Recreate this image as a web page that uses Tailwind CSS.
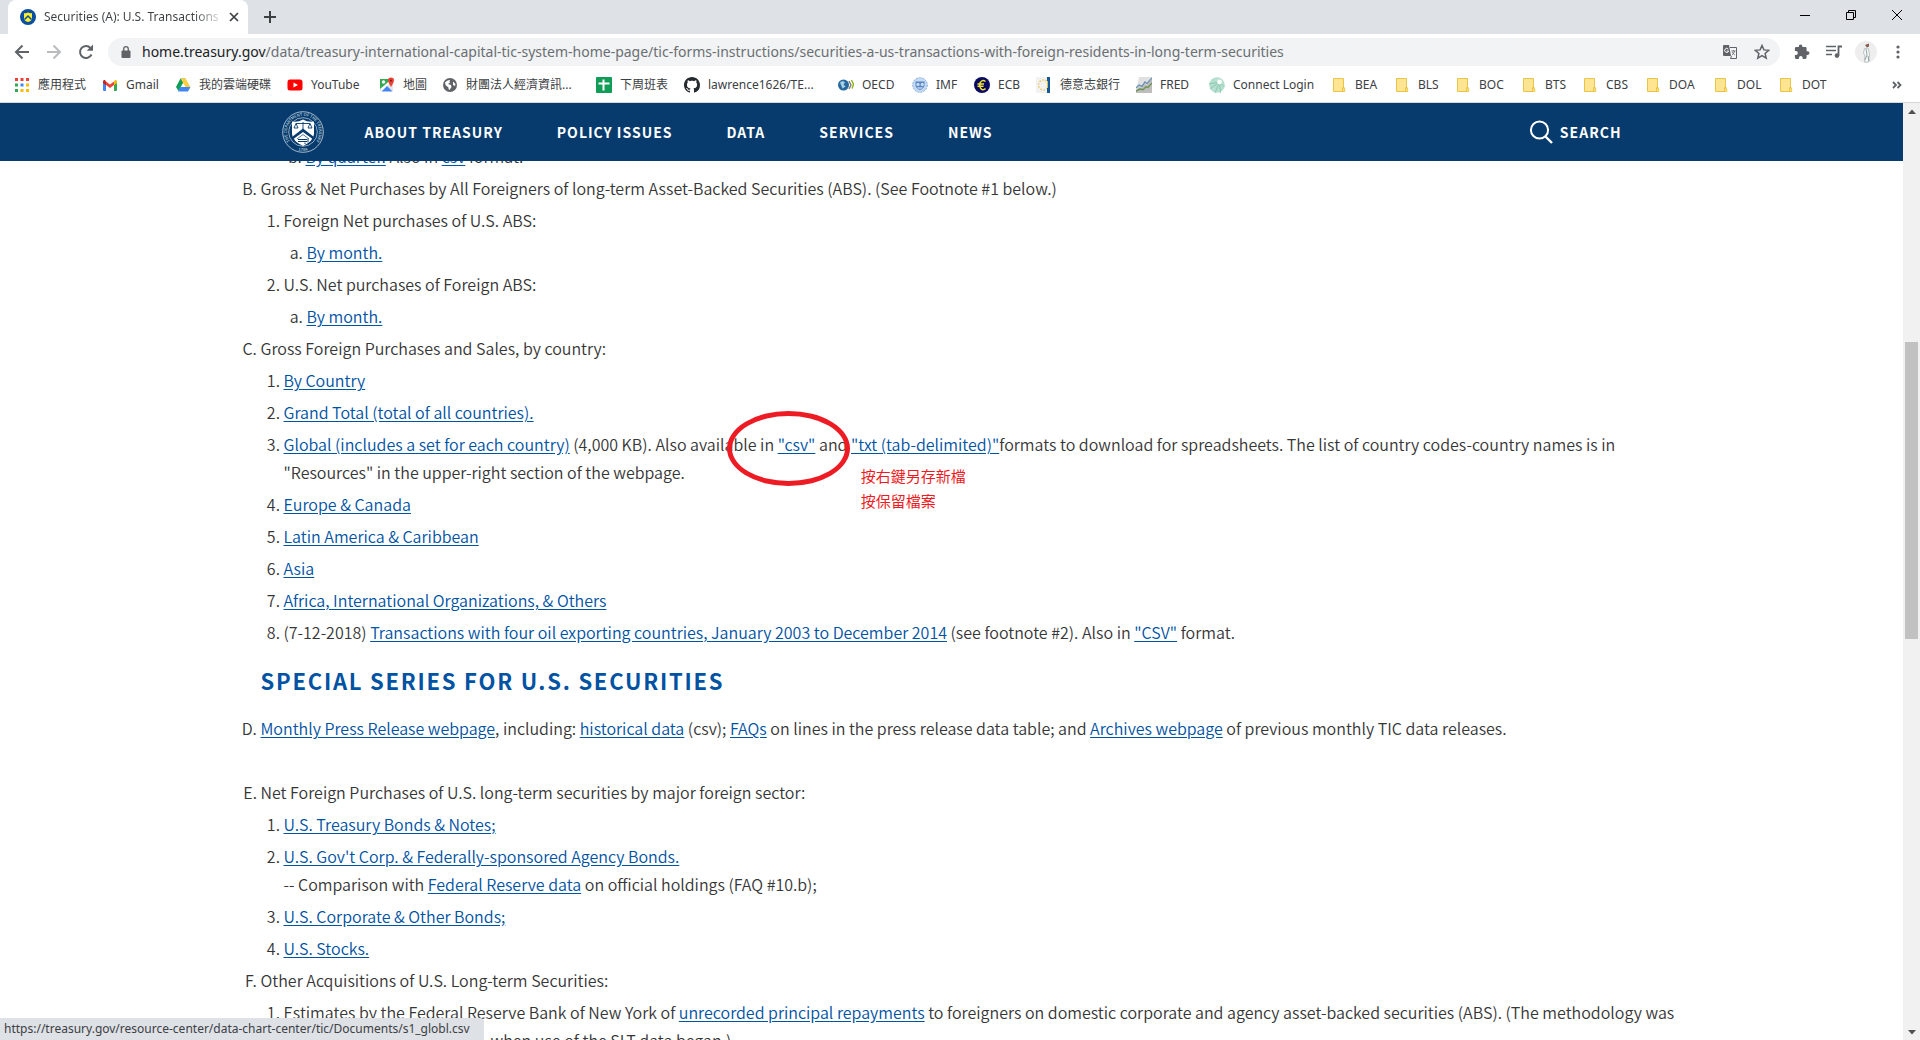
<!DOCTYPE html>
<html lang="en">
<head>
<meta charset="utf-8">
<title>Securities (A): U.S. Transactions</title>
<script src="https://cdn.jsdelivr.net/npm/@tailwindcss/browser@4"></script>
</head>
<body class="flex h-screen flex-col overflow-hidden bg-white font-['Noto_Sans','Noto_Sans_CJK_TC',sans-serif] text-xs text-[#3c4043]">

<svg class="hidden">
  <symbol id="folder" viewBox="0 0 16 16"><path d="M2.500 1.500h10v10h1.200v3H2.500z" fill="#ffe591" stroke="#e8c548"/><path d="M11.500 14.500v-4h2" fill="none" stroke="#e8c548"/></symbol>
</svg>

<!-- Tab strip -->
<div class="flex h-[34px] shrink-0 items-stretch bg-[#dee1e6] pl-2">
  <div class="flex w-[240px] items-center rounded-t-lg bg-white pr-2 pl-3">
    <svg class="size-4 shrink-0" viewBox="0 0 16 16"><circle cx="8" cy="8" r="8" fill="#0a4fa0"/><path d="M4 4q2 .6 4-.6Q10 4.600 12 4v5.500Q11.500 12 8 13 4.500 12 4 9.500z" fill="#ffee2e"/><path d="M4.500 10.500 8 7l3.500 3.500" fill="none" stroke="#0a4fa0" stroke-width="1.500"/></svg>
    <span class="ml-2 w-[176px] bg-linear-to-r from-[#3c4043] from-85% to-[#3c4043]/20 bg-clip-text whitespace-nowrap text-transparent">Securities (A): U.S. Transactions</span>
    <button aria-label="Close tab" class="ml-[7px] flex size-4 items-center justify-center"><svg class="size-4" viewBox="0 0 16 16"><path d="m4 4 8 8m0-8-8 8" stroke="#3c4043" stroke-width="1.700"/></svg></button>
  </div>
  <button aria-label="New tab" class="ml-3.5 flex items-center"><svg class="size-4" viewBox="0 0 16 16"><path d="M8 2v12M2 8h12" stroke="#3c4043" stroke-width="2"/></svg></button>
  <div class="ml-auto flex h-[29px]">
    <button aria-label="Minimize" class="flex w-[46px] items-center justify-center"><svg class="size-2.5" viewBox="0 0 10 10"><path d="M0 5.500h10" stroke="#000"/></svg></button>
    <button aria-label="Restore" class="flex w-[46px] items-center justify-center"><svg class="size-2.5" viewBox="0 0 10 10"><path d="M.5 2.500h7v7h-7zM2.500 2.500v-2h7v7h-2" fill="none" stroke="#000"/></svg></button>
    <button aria-label="Close" class="flex w-[46px] items-center justify-center"><svg class="size-2.5" viewBox="0 0 10 10"><path d="m0 0 10 10m0-10L0 10" stroke="#000"/></svg></button>
  </div>
</div>

<!-- Toolbar -->
<div class="flex h-9 shrink-0 items-center pr-3.5 pl-3">
  <button aria-label="Back" class="flex size-5 items-center justify-center"><svg class="size-5" viewBox="0 0 20 20"><path d="M17 10H4m6.500-6.500L4 10l6.500 6.500" fill="none" stroke="#5f6368" stroke-width="2"/></svg></button>
  <button aria-label="Forward" class="ml-3 flex size-5 items-center justify-center"><svg class="size-5" viewBox="0 0 20 20"><path d="M3 10h13M9.500 3.500 16 10l-6.500 6.500" fill="none" stroke="#babcbe" stroke-width="2"/></svg></button>
  <button aria-label="Reload" class="ml-3 flex size-5 items-center justify-center"><svg class="size-5" viewBox="0 0 20 20"><path d="M15.500 12.500A6 6 0 1 1 14.500 6" fill="none" stroke="#5f6368" stroke-width="2"/><path d="M17 2.500v6.300h-6.300z" fill="#5f6368"/></svg></button>
  <div class="ml-3 flex h-7 min-w-0 flex-1 items-center rounded-full bg-[#f1f3f4] pr-2.5 pl-[13px]">
    <svg class="h-3 w-2.5 shrink-0" viewBox="0 0 10 12"><rect x=".5" y="4.500" width="9" height="7.500" rx="1" fill="#5f6368"/><path d="M2.700 5V3a2.300 2.300 0 0 1 4.600 0v2" fill="none" stroke="#5f6368" stroke-width="1.300"/></svg>
    <span class="ml-[11px] truncate text-sm text-[#6b6f73]"><span class="text-[#202124]">home.treasury.gov</span>/data/treasury-international-capital-tic-system-home-page/tic-forms-instructions/securities-a-us-transactions-with-foreign-residents-in-long-term-securities</span>
    <button aria-label="Translate" class="ml-auto shrink-0"><svg class="size-4" viewBox="0 0 16 16"><path d="M2 1h5l2 11H2a1 1 0 0 1-1-1V2a1 1 0 0 1 1-1z" fill="#5f6368"/><path d="M8 3.500h6.500v11H8.500l1-2.500" fill="none" stroke="#5f6368"/><path d="M6.300 5.200A2 2 0 1 0 6.600 7H4.800" fill="none" stroke="#fff"/><path d="M9.300 7h4.200M11.400 6v1m1.200 0q-.6 2.600-2.800 4m.6-3q.8 2 2.500 3" fill="none" stroke="#5f6368" stroke-width=".8"/></svg></button>
    <button aria-label="Bookmark this page" class="ml-4 shrink-0"><svg class="size-4" viewBox="0 0 16 16"><path d="m8 1.500 1.900 4.400 4.800.4-3.600 3.200 1.100 4.700L8 11.700l-4.200 2.500 1.100-4.700L1.300 6.300l4.800-.4z" fill="none" stroke="#5f6368" stroke-width="1.500"/></svg></button>
  </div>
  <button aria-label="Extensions" class="ml-3.5"><svg class="size-4" viewBox="0 0 16 16"><path d="M13.700 7.300h-1.100V4.500c0-.8-.6-1.400-1.400-1.400H8.400V2.400a1.800 1.800 0 0 0-3.600 0v.7H2.200C1.400 3.100.9 3.700.9 4.500v2.600h1a1.900 1.900 0 0 1 0 3.900h-1v2.600c0 .8.600 1.400 1.300 1.400h2.700v-1.100a1.900 1.900 0 0 1 3.800 0V15h2.500c.8 0 1.400-.6 1.400-1.400v-2.700h1.100a1.800 1.800 0 0 0 0-3.600z" fill="#5f6368"/></svg></button>
  <button aria-label="Media controls" class="ml-4"><svg class="size-4" viewBox="0 0 16 16"><path d="M0 2.500h10M0 6.500h10M0 10.500h6" stroke="#5f6368" stroke-width="1.700"/><path d="M16 2.500h-3.500v9" fill="none" stroke="#5f6368" stroke-width="1.800"/><circle cx="11" cy="11.600" r="2.300" fill="#5f6368"/></svg></button>
  <button aria-label="Profile" class="ml-[13px]"><svg class="size-[22px]" viewBox="0 0 22 22"><circle cx="11" cy="11" r="11" fill="#eee"/><path d="m10 4 4-1.500v3l-2 1z" fill="#8a5a4e"/><path d="M9.500 7.500 13 7l1.500 6-1 8h-4l.5-6-1.500-3z" fill="#fafafa" stroke="#a9b8b8" stroke-width=".8"/><path d="m11 8 1 6-2 5m3-4 1 5" fill="none" stroke="#758c8c" stroke-width=".8"/></svg></button>
  <button aria-label="Menu" class="ml-[13px]"><svg class="size-4" viewBox="0 0 16 16" fill="#5f6368"><circle cx="8" cy="3" r="1.600"/><circle cx="8" cy="8" r="1.600"/><circle cx="8" cy="13" r="1.600"/></svg></button>
</div>

<!-- Bookmarks bar -->
<nav aria-label="Bookmarks" class="flex h-[33px] shrink-0 items-center border-b border-[#d5d7da] pb-0.5 pl-3.5 whitespace-nowrap *:shrink-0 [&_svg]:size-4 [&_svg]:shrink-0">
  <a href="#" class="flex w-[88px] items-center gap-2"><svg viewBox="0 0 16 16"><path d="M1 1h3v3H1zM6.500 1h3v3h-3zM12 1h3v3h-3z" fill="#ea4335"/><path d="M1 6.500h3v3H1z" fill="#34a853"/><path d="M6.500 6.500h3v3h-3z" fill="#4285f4"/><path d="M12 6.500h3v3h-3zM6.500 12h3v3h-3zM12 12h3v3h-3z" fill="#fbbc05"/><path d="M1 12h3v3H1z" fill="#34a853"/></svg>應用程式</a>
  <a href="#" class="flex w-[73px] items-center gap-2"><svg viewBox="0 0 16 16"><path d="M1 4v9a1 1 0 0 0 1 1h2V6z" fill="#4285f4"/><path d="M15 4v9a1 1 0 0 1-1 1h-2V6z" fill="#34a853"/><path d="M4 4.500 8 7.500l4-3v3.500l-4 3-4-3z" fill="#ea4335"/><path d="M12 4.500 13 3q2-.5 2 1.500V6l-3 2.200z" fill="#fbbc05"/><path d="M4 4.500 3 3Q1 2.500 1 4.500V6l3 2.200z" fill="#c5221f"/></svg>Gmail</a>
  <a href="#" class="flex w-[112px] items-center gap-2"><svg viewBox="0 0 16 16"><path d="M5.500 1.500h5L8 6 3.500 14 1 10z" fill="#0f9d58"/><path d="M5.500 1.500h5L15.500 10h-5z" fill="#ffcd40"/><path d="M5.500 10h10L13 14.500H3z" fill="#4285f4"/></svg>我的雲端硬碟</a>
  <a href="#" class="flex w-[92px] items-center gap-2"><svg viewBox="0 0 16 16"><rect x=".5" y="2.500" width="15" height="11" rx="2.500" fill="#f00"/><path d="M6.500 5.500v5L11 8z" fill="#fff"/></svg>YouTube</a>
  <a href="#" class="flex w-[63px] items-center gap-2"><svg viewBox="0 0 16 16"><path d="M2 2h12v12H2z" fill="#e4e4e4"/><path d="M1 2h11L1 14z" fill="#34a853"/><path d="M2.500 14.500 8 9l5.500 5.500z" fill="#4285f4"/><path d="m1 12 12-10v2L2 14.500z" fill="#fff"/><circle cx="4.500" cy="5" r="1.700" fill="#fff"/><path d="M12 .5a3 3 0 0 1 3 3.200Q14.800 6 12 10 9.200 6 9 3.700A3 3 0 0 1 12 .5z" fill="#ea4335"/><circle cx="12" cy="3.600" r="1.100" fill="#8c1d18"/></svg>地圖</a>
  <a href="#" class="flex w-[154px] items-center gap-2"><svg viewBox="0 0 16 16"><circle cx="8" cy="8" r="7" fill="#5f6368"/><path d="M3 5.500q2.500-3 5-2.500-1 1.500 0 2.500l-2 1.500 3 1 .5 2-2 3Q6 12 6.500 10.500L3.500 8zM11 4.500l2.500 2.500-.5 2-2-1z" fill="#fff"/></svg>財團法人經濟資訊...</a>
  <a href="#" class="flex w-[88px] items-center gap-2"><svg viewBox="0 0 16 16"><rect width="16" height="16" rx="1" fill="#0f9d58"/><path d="M2.500 6.500h11M7.500 2.500v11" stroke="#fff" stroke-width="2"/></svg>下周班表</a>
  <a href="#" class="flex w-[154px] items-center gap-2"><svg viewBox="0 0 16 16"><path fill="#24292e" d="M8 0C3.580 0 0 3.580 0 8c0 3.540 2.290 6.530 5.470 7.590.4.070.55-.17.55-.38 0-.19-.01-.82-.01-1.490-2.010.37-2.530-.49-2.690-.94-.09-.23-.48-.94-.82-1.130-.28-.15-.68-.52-.01-.53.63-.01 1.080.58 1.230.82.72 1.210 1.870.87 2.330.66.07-.52.28-.87.51-1.070-1.780-.2-3.640-.89-3.640-3.950 0-.87.31-1.590.82-2.150-.08-.2-.36-1.020.08-2.120 0 0 .67-.21 2.200.82.64-.18 1.320-.27 2-.27s1.360.09 2 .27c1.530-1.040 2.200-.82 2.200-.82.44 1.100.16 1.920.08 2.120.51.56.82 1.270.82 2.150 0 3.070-1.870 3.750-3.650 3.950.29.25.54.73.54 1.480 0 1.070-.01 1.930-.01 2.200 0 .21.15.46.55.38A8.010 8.010 0 0 0 16 8c0-4.420-3.580-8-8-8z"/></svg>lawrence1626/TE...</a>
  <a href="#" class="flex w-[74px] items-center gap-2"><svg viewBox="0 0 16 16"><circle cx="5.500" cy="8" r="5.500" fill="#28689e"/><path d="M2 5.500q3-2.500 5 0l-1.500 2 2 2-3 2z" fill="#a9d2e6"/><path d="m11 4 2 4-2 4" fill="none" stroke="#777" stroke-width="1.300"/><path d="m13.500 3 2 4.500-1.500 4" fill="none" stroke="#93b81e" stroke-width="1.500"/></svg>OECD</a>
  <a href="#" class="flex w-[62px] items-center gap-2"><svg viewBox="0 0 16 16"><circle cx="8" cy="8" r="7.300" fill="#c5daf3" stroke="#82abdc" stroke-dasharray="2 1"/><path d="M3.500 4.500h9V9q-1 3-4.500 4-3.500-1-4.500-4z" fill="#5685c4"/><circle cx="6" cy="7.500" r="1.700" fill="#c5daf3"/><circle cx="10.300" cy="7.500" r="1.700" fill="#c5daf3"/><path d="M5.500 11h5" stroke="#fff"/></svg>IMF</a>
  <a href="#" class="flex w-[62px] items-center gap-2"><svg viewBox="0 0 16 16"><circle cx="8" cy="8" r="8" fill="#0a0a62"/><path d="M11.500 4.500Q8 2 6 6q-1 5 2 6.500 2 .6 3.500-1M3.500 7h6.500M3.500 9.300h6" fill="none" stroke="#f4e62e" stroke-width="1.500"/></svg>ECB</a>
  <a href="#" class="flex w-[100px] items-center gap-2"><svg viewBox="0 0 16 16"><path d="M0 0h14v16H0z" fill="#f2f2f2"/><circle cx="7.500" cy="8" r="5" fill="none" stroke="#f0cf6b" stroke-width="1.600" stroke-dasharray="1.600 1.500"/><path d="M11 0h3v16h-3z" fill="#13589a"/><path d="M11 4h1v7h-1z" fill="#d9c34a"/></svg>德意志銀行</a>
  <a href="#" class="flex w-[73px] items-center gap-2"><svg viewBox="0 0 16 16"><path d="M3 0h13v16H0z" fill="#e0e0e0"/><path d="m0 13 3-3 3 1 3-4 2 1 5-6v14H0z" fill="#bdbdbd"/><path d="m0 11 3-3 3 1.500L9 5l2 1.500L16 1" fill="none" stroke="#6f93b5" stroke-width="1.400"/><path d="m0 14 4-2 3 .8 3-3 2 .7 4-4.500" fill="none" stroke="#6f9450" stroke-width="1.400"/></svg>FRED</a>
  <a href="#" class="flex w-[122px] items-center gap-2"><svg viewBox="0 0 16 16"><circle cx="8" cy="8" r="7.800" fill="#b5dfcf"/><path d="M10.500 5 0 7m10.500-2L1 12m9.500-7L6 16m4.500-11 1 11m-1-11 5 5" stroke="#80c2aa" stroke-width=".8"/><circle cx="10.500" cy="5" r="2.400" fill="#fff"/></svg>Connect Login</a>
  <a href="#" class="flex w-[63px] items-center gap-2"><svg><use href="#folder"/></svg>BEA</a>
  <a href="#" class="flex w-[61px] items-center gap-2"><svg><use href="#folder"/></svg>BLS</a>
  <a href="#" class="flex w-[66px] items-center gap-2"><svg><use href="#folder"/></svg>BOC</a>
  <a href="#" class="flex w-[61px] items-center gap-2"><svg><use href="#folder"/></svg>BTS</a>
  <a href="#" class="flex w-[63px] items-center gap-2"><svg><use href="#folder"/></svg>CBS</a>
  <a href="#" class="flex w-[68px] items-center gap-2"><svg><use href="#folder"/></svg>DOA</a>
  <a href="#" class="flex w-[65px] items-center gap-2"><svg><use href="#folder"/></svg>DOL</a>
  <a href="#" class="flex items-center gap-2"><svg><use href="#folder"/></svg>DOT</a>
  <button aria-label="More bookmarks" class="mr-[15px] ml-auto"><svg viewBox="0 0 16 16"><path d="m4 5 3 3-3 3m4.500-6 3 3-3 3" fill="none" stroke="#5f6368" stroke-width="1.800"/></svg></button>
</nav>

<div class="flex min-h-0 flex-1">
  <div class="flex min-w-0 flex-1 flex-col overflow-hidden font-['Noto_Sans_CJK_TC',sans-serif]">

    <!-- Site header -->
    <header class="relative z-10 shrink-0 bg-[#083b6d] text-white">
      <div class="mx-auto flex h-[58px] max-w-[1340px] items-center">
        <a href="#" aria-label="U.S. Department of the Treasury">
          <svg class="size-[42px]" viewBox="0 0 42 42">
            <circle cx="21" cy="21" r="20.300" fill="none" stroke="#c9d6e3" stroke-width=".8"/>
            <circle cx="21" cy="21" r="14.300" fill="none" stroke="#c9d6e3" stroke-width=".7"/>
            <path id="ring" d="M10.800 33.200A16 16 0 1 1 31.200 33.200" fill="none"/>
            <text fill="#dfe8f0" font-size="4"><textPath href="#ring" startOffset="50%" text-anchor="middle">THE DEPARTMENT OF THE TREASURY</textPath></text>
            <text x="21" y="39.500" text-anchor="middle" fill="#dfe8f0" font-size="4">1789</text>
            <path d="M10 10.500q6 1 11-2 5 3 11 2V23q-.5 7-11 12Q10.500 30 10 23z" fill="#fff"/>
            <path d="M21 11v7M14 12.500h14M14 12.500 12 17h4zM28 12.500 26 17h4z" fill="none" stroke="#083b6d" stroke-width=".9"/>
            <path d="m10 26 11-8.500L32 26v3l-11-8-11 8z" fill="#083b6d"/>
            <path d="m15 28 6-4.500 6 4.500" fill="none" stroke="#083b6d" stroke-width=".7"/>
            <path d="M16 28.500h9m-9 2h9m1-3v4m-3 0v1.500" stroke="#083b6d"/>
          </svg>
        </a>
        <nav aria-label="Main" class="ml-[41px] flex gap-[54px] text-sm font-bold tracking-[1px]">
          <a href="#">ABOUT TREASURY</a><a href="#">POLICY ISSUES</a><a href="#">DATA</a><a href="#">SERVICES</a><a href="#">NEWS</a>
        </nav>
        <button class="ml-auto flex items-center gap-[7px] text-sm font-bold tracking-[1px]">
          <svg class="size-6" viewBox="0 0 24 24"><circle cx="10.500" cy="10" r="8.600" fill="none" stroke="#fff" stroke-width="2"/><path d="m16.500 16.500 6.500 6.500" stroke="#fff" stroke-width="2.400"/></svg>SEARCH
        </button>
      </div>
    </header>

    <!-- Scrolled page content -->
    <main class="-mt-[19px] w-full max-w-[1446px] self-center pl-8 text-base/7 font-[350] text-[#363636] [&_a]:text-[#0052a3] [&_a]:underline [&_a]:underline-offset-2 [&_li]:mb-1 [&_ol_ol]:mt-1 [&_ol_ol]:pl-[23px]">
      <div class="pl-[45px]">
        <ol start="2" class="list-[lower-alpha]"><li><a href="#">By quarter.</a> Also in <a href="#">csv</a> format.</li></ol>
      </div>
      <ol start="2" class="list-[upper-alpha]">
        <li>Gross &amp; Net Purchases by All Foreigners of long-term Asset-Backed Securities (ABS). (See Footnote #1 below.)
          <ol class="list-decimal">
            <li>Foreign Net purchases of U.S. ABS:<ol class="list-[lower-alpha]"><li><a href="#">By month.</a></li></ol></li>
            <li>U.S. Net purchases of Foreign ABS:<ol class="list-[lower-alpha]"><li><a href="#">By month.</a></li></ol></li>
          </ol>
        </li>
        <li>Gross Foreign Purchases and Sales, by country:
          <ol class="list-decimal">
            <li><a href="#">By Country</a></li>
            <li><a href="#">Grand Total (total of all countries).</a></li>
            <li><a href="#">Global (includes a set for each country)</a> (4,000 KB). Also available in <span class="relative"><a href="#">"csv"</a><span class="absolute -top-[21px] -left-[51px] h-[75px] w-[123px] rounded-[50%] border-5 border-[#ed1c24]"></span><span class="absolute top-[31px] left-[83px] text-[15px]/[25px] font-normal whitespace-nowrap text-[#ed1c24]">按右鍵另存新檔<br>按保留檔案</span></span> and <a href="#">"txt (tab-delimited)"</a>formats to download for spreadsheets. The list of country codes-country names is in "Resources" in the upper-right section of the webpage.</li>
            <li><a href="#">Europe &amp; Canada</a></li>
            <li><a href="#">Latin America &amp; Caribbean</a></li>
            <li><a href="#">Asia</a></li>
            <li><a href="#">Africa, International Organizations, &amp; Others</a></li>
            <li>(7-12-2018) <a href="#">Transactions with four oil exporting countries, January 2003 to December 2014</a> (see footnote #2). Also in <a href="#">"CSV"</a> format.</li>
          </ol>
        </li>
      </ol>
      <h2 class="my-5 text-[22px]/7 font-bold tracking-[0.08em] text-[#0052a3]">SPECIAL SERIES FOR U.S. SECURITIES</h2>
      <ol start="4" class="list-[upper-alpha]">
        <li><p class="mb-9"><a href="#">Monthly Press Release webpage</a>, including: <a href="#">historical data</a> (csv); <a href="#">FAQs</a> on lines in the press release data table; and <a href="#">Archives webpage</a> of previous monthly TIC data releases.</p></li>
        <li>Net Foreign Purchases of U.S. long-term securities by major foreign sector:
          <ol class="list-decimal">
            <li><a href="#">U.S. Treasury Bonds &amp; Notes;</a></li>
            <li><a href="#">U.S. Gov't Corp. &amp; Federally-sponsored Agency Bonds.</a><br>-- Comparison with <a href="#">Federal Reserve data</a> on official holdings (FAQ #10.b);</li>
            <li><a href="#">U.S. Corporate &amp; Other Bonds;</a></li>
            <li><a href="#">U.S. Stocks.</a></li>
          </ol>
        </li>
        <li>Other Acquisitions of U.S. Long-term Securities:
          <ol class="list-decimal">
            <li>Estimates by the Federal Reserve Bank of New York of <a href="#">unrecorded principal repayments</a> to foreigners on domestic corporate and agency asset-backed securities (ABS). (The methodology was changed in December 2011, when use of the SLT data began.)</li>
          </ol>
        </li>
      </ol>
    </main>
  </div>

  <!-- Page scrollbar -->
  <div class="flex w-[17px] shrink-0 flex-col items-center bg-[#f1f1f1]">
    <svg class="size-4 shrink-0" viewBox="0 0 16 16"><path d="M8 6.500 12 11H4z" fill="#505050"/></svg>
    <div class="flex w-full flex-1 flex-col items-center">
      <div class="flex-[223]"></div>
      <div class="w-[13px] flex-[297] bg-[#c1c1c1]"></div>
      <div class="flex-[385]"></div>
    </div>
    <svg class="size-4 shrink-0" viewBox="0 0 16 16"><path d="M8 10.500 12 6H4z" fill="#505050"/></svg>
  </div>
</div>

<!-- Link status bubble -->
<div class="fixed bottom-0 left-0 z-20 h-[22px] w-[484px] rounded-tr-sm bg-[#dee1e6] pl-1 leading-[22px] whitespace-nowrap">https://treasury.gov/resource-center/data-chart-center/tic/Documents/s1_globl.csv</div>
</body>
</html>
